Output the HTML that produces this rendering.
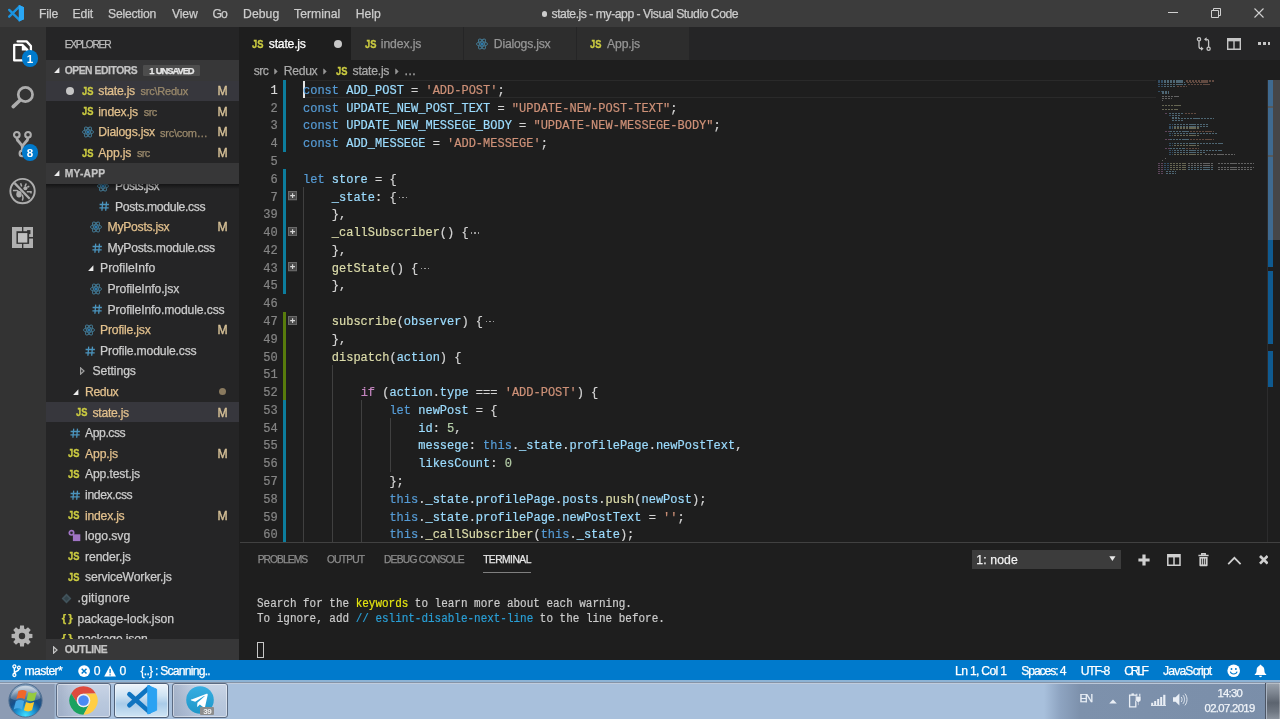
<!DOCTYPE html>
<html><head><meta charset="utf-8"><title>state.js - my-app - Visual Studio Code</title>
<style>
html,body{margin:0;padding:0;background:#1e1e1e;}
body{width:1280px;height:719px;overflow:hidden;position:relative;font-family:"Liberation Sans",sans-serif;}
#r{position:absolute;left:0;top:0;width:1280px;height:719px;overflow:hidden;will-change:transform;filter:blur(0.4px);}
#r div,#r span,#r svg{position:absolute;}
#r span{white-space:pre;}
#r .code span{position:static;}
</style></head><body><div id="r">
<div style="left:0px;top:0px;width:1280px;height:27px;background:#3c3c3c;"></div>
<div style="left:0px;top:27px;width:46.3px;height:632.5px;background:#333333;"></div>
<div style="left:46.3px;top:27px;width:193.2px;height:632.5px;background:#252526;"></div>
<div style="left:239.5px;top:27px;width:1040.5px;height:33px;background:#252526;"></div>
<div style="left:239.5px;top:60px;width:1040.5px;height:599.5px;background:#1e1e1e;"></div>
<div style="left:0px;top:659.5px;width:1280px;height:20.5px;background:#007acc;"></div>
<svg style="left:6px;top:3px;" width="22" height="21" viewBox="0 0 22 21"><path d="M12.8 2.1L18 4.3V16.300L12.800 18.500z" fill="#2aa7f5"/>
<path d="M3.200 6.900L13.600 17.200" stroke="#1b93e0" stroke-width="2.400" stroke-linecap="round"/>
<path d="M3.200 13.700L13.600 3.400" stroke="#1b93e0" stroke-width="2.400" stroke-linecap="round"/>
<path d="M12.900 6.600L8.600 10.300L12.900 14z" fill="#3c3c3c"/>
<path d="M12.800 2.100L18 4.300V16.300L12.800 18.500z" fill="#2aa7f5"/></svg>
<span style="left:39.07px;top:5.56px;font-size:12.2px;line-height:17.08px;color:#cccccc;letter-spacing:-0.162px;-webkit-text-stroke:0.25px #cccccc;">File</span>
<span style="left:72.57px;top:5.56px;font-size:12.2px;line-height:17.08px;color:#cccccc;letter-spacing:-0.121px;-webkit-text-stroke:0.25px #cccccc;">Edit</span>
<span style="left:108.07px;top:5.56px;font-size:12.2px;line-height:17.08px;color:#cccccc;letter-spacing:-0.248px;-webkit-text-stroke:0.25px #cccccc;">Selection</span>
<span style="left:172.07px;top:5.56px;font-size:12.2px;line-height:17.08px;color:#cccccc;letter-spacing:-0.183px;-webkit-text-stroke:0.25px #cccccc;">View</span>
<span style="left:212.57px;top:5.56px;font-size:12.2px;line-height:17.08px;color:#cccccc;letter-spacing:-1.112px;-webkit-text-stroke:0.25px #cccccc;">Go</span>
<span style="left:243.07px;top:5.56px;font-size:12.2px;line-height:17.08px;color:#cccccc;letter-spacing:0.058px;-webkit-text-stroke:0.25px #cccccc;">Debug</span>
<span style="left:294.07px;top:5.56px;font-size:12.2px;line-height:17.08px;color:#cccccc;letter-spacing:0.013px;-webkit-text-stroke:0.25px #cccccc;">Terminal</span>
<span style="left:355.67px;top:5.56px;font-size:12.2px;line-height:17.08px;color:#cccccc;letter-spacing:0.025px;-webkit-text-stroke:0.25px #cccccc;">Help</span>
<div style="left:541.5px;top:11.2px;width:5.8px;height:5.8px;background:#cccccc;border-radius:50%"></div>
<span style="left:551.57px;top:5.76px;font-size:12.2px;line-height:17.08px;color:#cccccc;letter-spacing:-0.468px;-webkit-text-stroke:0.25px #cccccc;">state.js - my-app - Visual Studio Code</span>
<div style="left:1168px;top:12.2px;width:10px;height:1px;background:#d0d0d0;"></div>
<svg style="left:1210px;top:7px;" width="12" height="12" viewBox="0 0 12 12"><path d="M1.5 3.5h7v7h-7z M3.5 3.5v-2h7v7h-2" fill="none" stroke="#d0d0d0" stroke-width="1"/></svg>
<svg style="left:1254px;top:8px;" width="10" height="10" viewBox="0 0 10 10"><path d="M0.5 0.5L9.5 9.5M9.5 0.5L0.5 9.5" stroke="#d0d0d0" stroke-width="1.1"/></svg>
<svg style="left:10px;top:37px;" width="26" height="28" viewBox="0 0 26 28"><g fill="none" stroke="#ffffff" stroke-width="2.3" stroke-linejoin="round" stroke-linecap="round">
<path d="M7.600 4.400H16.600L20.900 9V16"/>
<path d="M4.200 7.800H12.300L17.300 12.900V23.400H4.200z"/>
</g><path d="M11.800 8V13.400H17.300z" fill="#ffffff"/></svg>
<div style="left:21.8px;top:50.3px;width:16.5px;height:16.5px;background:#007acc;border-radius:50%"></div>
<span style="left:30.00px;top:50.58px;font-size:11.6px;line-height:16.24px;color:#ffffff;letter-spacing:0.000px;font-weight:700;transform:translateX(-50%);">1</span>
<svg style="left:8px;top:84px;" width="30" height="28" viewBox="0 0 30 28"><circle cx="17.4" cy="10.5" r="7.15" fill="none" stroke="#adadad" stroke-width="2.7"/>
<path d="M12 16.200L5.200 22.600" stroke="#adadad" stroke-width="3.6" stroke-linecap="round"/></svg>
<svg style="left:10px;top:128px;" width="30" height="32" viewBox="0 0 30 32"><g fill="none" stroke="#adadad" stroke-width="2.1">
<circle cx="6.800" cy="6.800" r="2.800"/><circle cx="18" cy="6.800" r="2.800"/><circle cx="12.400" cy="25.400" r="2.800"/></g>
<path d="M6.800 9.800C6.800 14 12.400 15 12.400 19.500V22.600M18 9.800C18 14 12.400 15 12.400 19.500" fill="none" stroke="#adadad" stroke-width="2.900"/></svg>
<div style="left:21.8px;top:144.4px;width:16.5px;height:16.5px;background:#007acc;border-radius:50%"></div>
<span style="left:30.00px;top:144.68px;font-size:11.6px;line-height:16.24px;color:#ffffff;letter-spacing:0.000px;font-weight:700;transform:translateX(-50%);">8</span>
<svg style="left:8px;top:177px;" width="29" height="29" viewBox="0 0 29 29"><circle cx="14.55" cy="14.1" r="12.2" fill="none" stroke="#adadad" stroke-width="1.9"/>
<path d="M6.600 6.100L21.700 21.700" stroke="#adadad" stroke-width="2.3"/>
<ellipse cx="11" cy="17.300" rx="2.700" ry="3.200" fill="#adadad"/>
<circle cx="17.400" cy="11.300" r="2" fill="#adadad"/>
<path d="M4.900 13.600H8.800Q10 13.700 10.400 15M14.300 17.600Q15.700 21 14.300 23.600M12.600 6.200L13.700 9.600M18.300 6.500L17 9.400M18.800 14.800H23V16.500M19.300 10.200L21.300 9.300" stroke="#adadad" stroke-width="1.5" fill="none"/></svg>
<svg style="left:11.8px;top:226.9px;" width="21.4" height="21.2" viewBox="0 0 21.4 21.2"><rect x="0" y="0" width="21.35" height="21.1" fill="#b0b0b0"/>
<rect x="4.45" y="4.2" width="12.7" height="12.7" fill="#333"/>
<rect x="10" y="0" width="1.35" height="21.2" fill="#333"/>
<rect x="17" y="10" width="4.5" height="1.55" fill="#333"/>
<rect x="15.1" y="3.1" width="3.35" height="4" fill="#333"/>
<rect x="5.95" y="6.1" width="9.4" height="9.5" fill="#c0c0c0"/></svg>
<svg style="left:11.3px;top:625.25px;" width="22" height="22" viewBox="0 0 22 22"><path d="M18.26 8.75L21.42 9.05L21.42 12.95L18.26 13.25L17.72 14.55L19.75 16.99L16.99 19.75L14.55 17.72L13.25 18.26L12.95 21.42L9.05 21.42L8.75 18.26L7.45 17.72L5.01 19.75L2.25 16.99L4.28 14.55L3.74 13.25L0.58 12.95L0.58 9.05L3.74 8.75L4.28 7.45L2.25 5.01L5.01 2.25L7.45 4.28L8.75 3.74L9.05 0.58L12.95 0.58L13.25 3.74L14.55 4.28L16.99 2.25L19.75 5.01L17.72 7.45Z M14.2 11 A3.2 3.2 0 1 0 7.8 11 A3.2 3.2 0 1 0 14.2 11Z" fill="#b4b4b4" fill-rule="evenodd"/></svg>
<div style="left:46.3px;top:401.9px;width:193.2px;height:20.5px;background:#37373d;"></div>
<svg style="left:97.3px;top:180.0px;" width="12" height="12" viewBox="0 0 12 12"><g fill="none" stroke="#4a8fb0" stroke-width="0.95" opacity="0.78">
<ellipse cx="6" cy="6" rx="5.600" ry="2.200"/><ellipse cx="6" cy="6" rx="5.600" ry="2.200" transform="rotate(60 6 6)"/><ellipse cx="6" cy="6" rx="5.600" ry="2.200" transform="rotate(120 6 6)"/></g><circle cx="6" cy="6" r="1.500" fill="#2a78ad"/></svg>
<span style="left:115.07px;top:177.96px;font-size:12.2px;line-height:17.08px;color:#cccccc;letter-spacing:-0.514px;-webkit-text-stroke:0.25px #cccccc;">Posts.jsx</span>
<svg style="left:99.1px;top:201.4px;" width="10.4" height="10.4" viewBox="0 0 10.4 10.4"><path d="M3.700 0.600L2.900 9.800M7.500 0.600L6.700 9.800M0.600 3.500H9.900M0.400 6.900H9.700" stroke="#4b94bd" stroke-width="1.3" fill="none"/></svg>
<span style="left:115.07px;top:198.56px;font-size:12.2px;line-height:17.08px;color:#cccccc;letter-spacing:-0.324px;-webkit-text-stroke:0.25px #cccccc;">Posts.module.css</span>
<svg style="left:90.3px;top:221.2px;" width="12" height="12" viewBox="0 0 12 12"><g fill="none" stroke="#4a8fb0" stroke-width="0.95" opacity="0.78">
<ellipse cx="6" cy="6" rx="5.600" ry="2.200"/><ellipse cx="6" cy="6" rx="5.600" ry="2.200" transform="rotate(60 6 6)"/><ellipse cx="6" cy="6" rx="5.600" ry="2.200" transform="rotate(120 6 6)"/></g><circle cx="6" cy="6" r="1.500" fill="#2a78ad"/></svg>
<span style="left:107.57px;top:219.16px;font-size:12.2px;line-height:17.08px;color:#e2c08d;letter-spacing:-0.286px;-webkit-text-stroke:0.25px #e2c08d;">MyPosts.jsx</span>
<span style="left:217.47px;top:219.16px;font-size:12.2px;line-height:17.08px;color:#d6c097;letter-spacing:0.000px;-webkit-text-stroke:0.35px #d6c097;">M</span>
<svg style="left:92.1px;top:242.60000000000002px;" width="10.4" height="10.4" viewBox="0 0 10.4 10.4"><path d="M3.700 0.600L2.900 9.800M7.500 0.600L6.700 9.800M0.600 3.500H9.900M0.400 6.900H9.700" stroke="#4b94bd" stroke-width="1.3" fill="none"/></svg>
<span style="left:107.57px;top:239.76px;font-size:12.2px;line-height:17.08px;color:#cccccc;letter-spacing:-0.242px;-webkit-text-stroke:0.25px #cccccc;">MyPosts.module.css</span>
<svg style="left:87.6px;top:265.2px;" width="6" height="6.4" viewBox="0 0 6 6.4"><path d="M5.4 0.3V5.9H0.1z" fill="#ececec"/></svg>
<span style="left:100.07px;top:260.36px;font-size:12.2px;line-height:17.08px;color:#cccccc;letter-spacing:0.028px;-webkit-text-stroke:0.25px #cccccc;">ProfileInfo</span>
<svg style="left:90.3px;top:283.0px;" width="12" height="12" viewBox="0 0 12 12"><g fill="none" stroke="#4a8fb0" stroke-width="0.95" opacity="0.78">
<ellipse cx="6" cy="6" rx="5.600" ry="2.200"/><ellipse cx="6" cy="6" rx="5.600" ry="2.200" transform="rotate(60 6 6)"/><ellipse cx="6" cy="6" rx="5.600" ry="2.200" transform="rotate(120 6 6)"/></g><circle cx="6" cy="6" r="1.500" fill="#2a78ad"/></svg>
<span style="left:107.57px;top:280.96px;font-size:12.2px;line-height:17.08px;color:#cccccc;letter-spacing:-0.107px;-webkit-text-stroke:0.25px #cccccc;">ProfileInfo.jsx</span>
<svg style="left:92.1px;top:304.40000000000003px;" width="10.4" height="10.4" viewBox="0 0 10.4 10.4"><path d="M3.700 0.600L2.900 9.800M7.500 0.600L6.700 9.800M0.600 3.500H9.900M0.400 6.900H9.700" stroke="#4b94bd" stroke-width="1.3" fill="none"/></svg>
<span style="left:107.57px;top:301.56px;font-size:12.2px;line-height:17.08px;color:#cccccc;letter-spacing:-0.131px;-webkit-text-stroke:0.25px #cccccc;">ProfileInfo.module.css</span>
<svg style="left:82.8px;top:324.20000000000005px;" width="12" height="12" viewBox="0 0 12 12"><g fill="none" stroke="#4a8fb0" stroke-width="0.95" opacity="0.78">
<ellipse cx="6" cy="6" rx="5.600" ry="2.200"/><ellipse cx="6" cy="6" rx="5.600" ry="2.200" transform="rotate(60 6 6)"/><ellipse cx="6" cy="6" rx="5.600" ry="2.200" transform="rotate(120 6 6)"/></g><circle cx="6" cy="6" r="1.500" fill="#2a78ad"/></svg>
<span style="left:100.07px;top:322.16px;font-size:12.2px;line-height:17.08px;color:#e2c08d;letter-spacing:-0.217px;-webkit-text-stroke:0.25px #e2c08d;">Profile.jsx</span>
<span style="left:217.47px;top:322.16px;font-size:12.2px;line-height:17.08px;color:#d6c097;letter-spacing:0.000px;-webkit-text-stroke:0.35px #d6c097;">M</span>
<svg style="left:84.6px;top:345.6px;" width="10.4" height="10.4" viewBox="0 0 10.4 10.4"><path d="M3.700 0.600L2.900 9.800M7.500 0.600L6.700 9.800M0.600 3.500H9.900M0.400 6.900H9.700" stroke="#4b94bd" stroke-width="1.3" fill="none"/></svg>
<span style="left:100.07px;top:342.76px;font-size:12.2px;line-height:17.08px;color:#cccccc;letter-spacing:-0.172px;-webkit-text-stroke:0.25px #cccccc;">Profile.module.css</span>
<svg style="left:80px;top:367.4px;" width="5" height="8" viewBox="0 0 5 8"><path d="M0.6 0.9L4 4L0.6 7.1z" fill="none" stroke="#a0a0a0" stroke-width="1.25"/></svg>
<span style="left:92.57px;top:363.36px;font-size:12.2px;line-height:17.08px;color:#cccccc;letter-spacing:-0.092px;-webkit-text-stroke:0.25px #cccccc;">Settings</span>
<svg style="left:72.6px;top:388.8px;" width="6" height="6.4" viewBox="0 0 6 6.4"><path d="M5.4 0.3V5.9H0.1z" fill="#ececec"/></svg>
<span style="left:85.07px;top:383.96px;font-size:12.2px;line-height:17.08px;color:#e2c08d;letter-spacing:-0.395px;-webkit-text-stroke:0.25px #e2c08d;">Redux</span>
<div style="left:218.8px;top:388.4px;width:7px;height:7px;background:#8a7a5f;border-radius:50%"></div>
<span style="left:75.53px;top:404.28px;font-size:11.6px;line-height:16.24px;color:#cbcb41;letter-spacing:0.000px;transform:scaleX(0.806);transform-origin:0 50%;-webkit-text-stroke:0.3px #cbcb41;font-weight:700;">JS</span>
<span style="left:92.57px;top:404.56px;font-size:12.2px;line-height:17.08px;color:#e2c08d;letter-spacing:-0.282px;-webkit-text-stroke:0.25px #e2c08d;">state.js</span>
<span style="left:217.47px;top:404.56px;font-size:12.2px;line-height:17.08px;color:#d6c097;letter-spacing:0.000px;-webkit-text-stroke:0.35px #d6c097;">M</span>
<svg style="left:69.6px;top:428.00000000000006px;" width="10.4" height="10.4" viewBox="0 0 10.4 10.4"><path d="M3.700 0.600L2.900 9.800M7.500 0.600L6.700 9.800M0.600 3.500H9.900M0.400 6.900H9.700" stroke="#4b94bd" stroke-width="1.3" fill="none"/></svg>
<span style="left:85.07px;top:425.16px;font-size:12.2px;line-height:17.08px;color:#cccccc;letter-spacing:-0.451px;-webkit-text-stroke:0.25px #cccccc;">App.css</span>
<span style="left:68.13px;top:445.48px;font-size:11.6px;line-height:16.24px;color:#cbcb41;letter-spacing:0.000px;transform:scaleX(0.806);transform-origin:0 50%;-webkit-text-stroke:0.3px #cbcb41;font-weight:700;">JS</span>
<span style="left:85.07px;top:445.76px;font-size:12.2px;line-height:17.08px;color:#e2c08d;letter-spacing:-0.144px;-webkit-text-stroke:0.25px #e2c08d;">App.js</span>
<span style="left:217.47px;top:445.76px;font-size:12.2px;line-height:17.08px;color:#d6c097;letter-spacing:0.000px;-webkit-text-stroke:0.35px #d6c097;">M</span>
<span style="left:68.13px;top:466.08px;font-size:11.6px;line-height:16.24px;color:#cbcb41;letter-spacing:0.000px;transform:scaleX(0.806);transform-origin:0 50%;-webkit-text-stroke:0.3px #cbcb41;font-weight:700;">JS</span>
<span style="left:85.07px;top:466.36px;font-size:12.2px;line-height:17.08px;color:#cccccc;letter-spacing:-0.175px;-webkit-text-stroke:0.25px #cccccc;">App.test.js</span>
<svg style="left:69.6px;top:489.8px;" width="10.4" height="10.4" viewBox="0 0 10.4 10.4"><path d="M3.700 0.600L2.900 9.800M7.500 0.600L6.700 9.800M0.600 3.500H9.900M0.400 6.900H9.700" stroke="#4b94bd" stroke-width="1.3" fill="none"/></svg>
<span style="left:85.07px;top:486.96px;font-size:12.2px;line-height:17.08px;color:#cccccc;letter-spacing:-0.395px;-webkit-text-stroke:0.25px #cccccc;">index.css</span>
<span style="left:68.13px;top:507.28px;font-size:11.6px;line-height:16.24px;color:#cbcb41;letter-spacing:0.000px;transform:scaleX(0.806);transform-origin:0 50%;-webkit-text-stroke:0.3px #cbcb41;font-weight:700;">JS</span>
<span style="left:85.07px;top:507.56px;font-size:12.2px;line-height:17.08px;color:#e2c08d;letter-spacing:-0.239px;-webkit-text-stroke:0.25px #e2c08d;">index.js</span>
<span style="left:217.47px;top:507.56px;font-size:12.2px;line-height:17.08px;color:#d6c097;letter-spacing:0.000px;-webkit-text-stroke:0.35px #d6c097;">M</span>
<svg style="left:67.5px;top:529.2px;" width="13" height="13" viewBox="0 0 13 13"><circle cx="3.5" cy="3.8" r="2.2" fill="none" stroke="#a074c4" stroke-width="1.7"/><rect x="4.9" y="5.3" width="7.4" height="6.8" fill="#a074c4"/></svg>
<span style="left:85.07px;top:528.16px;font-size:12.2px;line-height:17.08px;color:#cccccc;letter-spacing:-0.036px;-webkit-text-stroke:0.25px #cccccc;">logo.svg</span>
<span style="left:68.13px;top:548.48px;font-size:11.6px;line-height:16.24px;color:#cbcb41;letter-spacing:0.000px;transform:scaleX(0.806);transform-origin:0 50%;-webkit-text-stroke:0.3px #cbcb41;font-weight:700;">JS</span>
<span style="left:85.07px;top:548.76px;font-size:12.2px;line-height:17.08px;color:#cccccc;letter-spacing:-0.106px;-webkit-text-stroke:0.25px #cccccc;">render.js</span>
<span style="left:68.13px;top:569.08px;font-size:11.6px;line-height:16.24px;color:#cbcb41;letter-spacing:0.000px;transform:scaleX(0.806);transform-origin:0 50%;-webkit-text-stroke:0.3px #cbcb41;font-weight:700;">JS</span>
<span style="left:85.07px;top:569.36px;font-size:12.2px;line-height:17.08px;color:#cccccc;letter-spacing:-0.151px;-webkit-text-stroke:0.25px #cccccc;">serviceWorker.js</span>
<svg style="left:61px;top:592.5px;" width="11" height="11" viewBox="0 0 11 11"><path d="M5.5 0.6L10.4 5.5L5.5 10.4L0.6 5.5z" fill="#41535b"/><path d="M5.5 3L8 5.5L5.5 8L3 5.5z" fill="#34444b"/></svg>
<span style="left:77.57px;top:589.96px;font-size:12.2px;line-height:17.08px;color:#cccccc;letter-spacing:0.224px;-webkit-text-stroke:0.25px #cccccc;">.gitignore</span>
<span style="left:61.70px;top:610.52px;font-size:11.4px;line-height:15.96px;color:#cbcb41;letter-spacing:2.023px;-webkit-text-stroke:0.25px #cbcb41;font-weight:700;">{}</span>
<span style="left:77.57px;top:610.56px;font-size:12.2px;line-height:17.08px;color:#cccccc;letter-spacing:-0.072px;-webkit-text-stroke:0.25px #cccccc;">package-lock.json</span>
<span style="left:61.70px;top:631.12px;font-size:11.4px;line-height:15.96px;color:#cbcb41;letter-spacing:2.023px;-webkit-text-stroke:0.25px #cbcb41;font-weight:700;">{}</span>
<span style="left:77.57px;top:631.16px;font-size:12.2px;line-height:17.08px;color:#cccccc;letter-spacing:-0.152px;-webkit-text-stroke:0.25px #cccccc;">package.json</span>
<div style="left:46.3px;top:27px;width:193.2px;height:156.6px;background:#252526;"></div>
<span style="left:64.64px;top:37.69px;font-size:10.3px;line-height:14.42px;color:#bbbbbb;letter-spacing:-1.296px;-webkit-text-stroke:0.25px #bbbbbb;">EXPLORER</span>
<div style="left:46.3px;top:60px;width:193.2px;height:20.5px;background:#373738;"></div>
<svg style="left:53.6px;top:67.1px;" width="6" height="6.4" viewBox="0 0 6 6.4"><path d="M5.4 0.3V5.9H0.1z" fill="#ececec"/></svg>
<span style="left:64.64px;top:63.69px;font-size:10.3px;line-height:14.42px;color:#c4c4c4;letter-spacing:-0.419px;-webkit-text-stroke:0.25px #c4c4c4;font-weight:700;">OPEN EDITORS</span>
<div style="left:143px;top:64.6px;width:57px;height:11.8px;background:#4d4d4d;border-radius:1px;"></div>
<span style="left:149.17px;top:64.42px;font-size:9.4px;line-height:13.16px;color:#e6e6e6;letter-spacing:0.000px;-webkit-text-stroke:0.25px #e6e6e6;font-weight:700;">1</span>
<span style="left:155.77px;top:64.42px;font-size:9.4px;line-height:13.16px;color:#e6e6e6;letter-spacing:-1.050px;-webkit-text-stroke:0.25px #e6e6e6;font-weight:700;">UNSAVED</span>
<div style="left:46.3px;top:80.5px;width:193.2px;height:20.4px;background:#37373d;"></div>
<div style="left:66.3px;top:87.2px;width:8px;height:8px;background:#c5c5c5;border-radius:50%"></div>
<span style="left:81.53px;top:82.88px;font-size:11.6px;line-height:16.24px;color:#cbcb41;letter-spacing:0.000px;transform:scaleX(0.806);transform-origin:0 50%;-webkit-text-stroke:0.3px #cbcb41;font-weight:700;">JS</span>
<span style="left:98.32px;top:83.16px;font-size:12.2px;line-height:17.08px;color:#e2c08d;letter-spacing:-0.246px;-webkit-text-stroke:0.25px #e2c08d;">state.js</span>
<span style="left:140.62px;top:84.30px;font-size:11.0px;line-height:15.4px;color:#9b8a6c;letter-spacing:-0.245px;-webkit-text-stroke:0.25px #9b8a6c;">src\Redux</span>
<span style="left:217.47px;top:83.16px;font-size:12.2px;line-height:17.08px;color:#d6c097;letter-spacing:0.000px;-webkit-text-stroke:0.35px #d6c097;">M</span>
<span style="left:81.53px;top:103.48px;font-size:11.6px;line-height:16.24px;color:#cbcb41;letter-spacing:0.000px;transform:scaleX(0.806);transform-origin:0 50%;-webkit-text-stroke:0.3px #cbcb41;font-weight:700;">JS</span>
<span style="left:98.32px;top:103.76px;font-size:12.2px;line-height:17.08px;color:#e2c08d;letter-spacing:-0.203px;-webkit-text-stroke:0.25px #e2c08d;">index.js</span>
<span style="left:143.87px;top:104.90px;font-size:11.0px;line-height:15.4px;color:#9b8a6c;letter-spacing:-0.676px;-webkit-text-stroke:0.25px #9b8a6c;">src</span>
<span style="left:217.47px;top:103.76px;font-size:12.2px;line-height:17.08px;color:#d6c097;letter-spacing:0.000px;-webkit-text-stroke:0.35px #d6c097;">M</span>
<svg style="left:81.5px;top:126.4px;" width="12" height="12" viewBox="0 0 12 12"><g fill="none" stroke="#4a8fb0" stroke-width="0.95" opacity="0.78">
<ellipse cx="6" cy="6" rx="5.600" ry="2.200"/><ellipse cx="6" cy="6" rx="5.600" ry="2.200" transform="rotate(60 6 6)"/><ellipse cx="6" cy="6" rx="5.600" ry="2.200" transform="rotate(120 6 6)"/></g><circle cx="6" cy="6" r="1.500" fill="#2a78ad"/></svg>
<span style="left:98.32px;top:124.36px;font-size:12.2px;line-height:17.08px;color:#e2c08d;letter-spacing:-0.203px;-webkit-text-stroke:0.25px #e2c08d;">Dialogs.jsx</span>
<span style="left:160.12px;top:125.50px;font-size:11.0px;line-height:15.4px;color:#9b8a6c;letter-spacing:-0.276px;-webkit-text-stroke:0.25px #9b8a6c;">src\com…</span>
<span style="left:217.47px;top:124.36px;font-size:12.2px;line-height:17.08px;color:#d6c097;letter-spacing:0.000px;-webkit-text-stroke:0.35px #d6c097;">M</span>
<span style="left:81.53px;top:144.68px;font-size:11.6px;line-height:16.24px;color:#cbcb41;letter-spacing:0.000px;transform:scaleX(0.806);transform-origin:0 50%;-webkit-text-stroke:0.3px #cbcb41;font-weight:700;">JS</span>
<span style="left:98.32px;top:144.96px;font-size:12.2px;line-height:17.08px;color:#e2c08d;letter-spacing:-0.144px;-webkit-text-stroke:0.25px #e2c08d;">App.js</span>
<span style="left:137.12px;top:146.10px;font-size:11.0px;line-height:15.4px;color:#9b8a6c;letter-spacing:-0.801px;-webkit-text-stroke:0.25px #9b8a6c;">src</span>
<span style="left:217.47px;top:144.96px;font-size:12.2px;line-height:17.08px;color:#d6c097;letter-spacing:0.000px;-webkit-text-stroke:0.35px #d6c097;">M</span>
<div style="left:46.3px;top:163px;width:193.2px;height:20.6px;background:#373738;"></div>
<div style="left:46.3px;top:183.6px;width:193.2px;height:5px;background:linear-gradient(rgba(0,0,0,.45),rgba(0,0,0,0));"></div>
<svg style="left:53.6px;top:169.8px;" width="6" height="6.4" viewBox="0 0 6 6.4"><path d="M5.4 0.3V5.9H0.1z" fill="#ececec"/></svg>
<span style="left:64.64px;top:166.59px;font-size:10.3px;line-height:14.42px;color:#c4c4c4;letter-spacing:0.207px;-webkit-text-stroke:0.25px #c4c4c4;font-weight:700;">MY-APP</span>
<div style="left:46.3px;top:639.25px;width:193.2px;height:20.3px;background:#373738;"></div>
<svg style="left:52.5px;top:645.5px;" width="5" height="8" viewBox="0 0 5 8"><path d="M0.6 0.9L4 4L0.6 7.1z" fill="none" stroke="#c5c5c5" stroke-width="1.25"/></svg>
<span style="left:64.64px;top:642.79px;font-size:10.3px;line-height:14.42px;color:#c4c4c4;letter-spacing:-0.364px;-webkit-text-stroke:0.25px #c4c4c4;font-weight:700;">OUTLINE</span>
<div style="left:239.5px;top:27px;width:111px;height:33px;background:#1e1e1e;"></div>
<div style="left:351.3px;top:27px;width:111.7px;height:33px;background:#2d2d2d;"></div>
<div style="left:463.8px;top:27px;width:112.45px;height:33px;background:#2d2d2d;"></div>
<div style="left:577.05px;top:27px;width:111.7px;height:33px;background:#2d2d2d;"></div>
<span style="left:252.03px;top:35.88px;font-size:11.6px;line-height:16.24px;color:#cbcb41;letter-spacing:0.000px;transform:scaleX(0.806);transform-origin:0 50%;-webkit-text-stroke:0.3px #cbcb41;font-weight:700;">JS</span>
<span style="left:268.82px;top:36.16px;font-size:12.2px;line-height:17.08px;color:#ffffff;letter-spacing:-0.210px;-webkit-text-stroke:0.25px #ffffff;">state.js</span>
<div style="left:333.9px;top:40.1px;width:8.2px;height:8.2px;background:#c8c8c8;border-radius:50%"></div>
<span style="left:364.53px;top:35.88px;font-size:11.6px;line-height:16.24px;color:#cbcb41;letter-spacing:0.000px;transform:scaleX(0.806);transform-origin:0 50%;-webkit-text-stroke:0.3px #cbcb41;font-weight:700;">JS</span>
<span style="left:380.82px;top:36.16px;font-size:12.2px;line-height:17.08px;color:#969696;letter-spacing:-0.096px;-webkit-text-stroke:0.25px #969696;">index.js</span>
<svg style="left:476.3px;top:38.2px;" width="12" height="12" viewBox="0 0 12 12"><g fill="none" stroke="#4a8fb0" stroke-width="0.95" opacity="0.78">
<ellipse cx="6" cy="6" rx="5.600" ry="2.200"/><ellipse cx="6" cy="6" rx="5.600" ry="2.200" transform="rotate(60 6 6)"/><ellipse cx="6" cy="6" rx="5.600" ry="2.200" transform="rotate(120 6 6)"/></g><circle cx="6" cy="6" r="1.500" fill="#2a78ad"/></svg>
<span style="left:493.82px;top:36.16px;font-size:12.2px;line-height:17.08px;color:#969696;letter-spacing:-0.203px;-webkit-text-stroke:0.25px #969696;">Dialogs.jsx</span>
<span style="left:590.13px;top:35.88px;font-size:11.6px;line-height:16.24px;color:#cbcb41;letter-spacing:0.000px;transform:scaleX(0.806);transform-origin:0 50%;-webkit-text-stroke:0.3px #cbcb41;font-weight:700;">JS</span>
<span style="left:607.07px;top:36.16px;font-size:12.2px;line-height:17.08px;color:#969696;letter-spacing:-0.144px;-webkit-text-stroke:0.25px #969696;">App.js</span>
<svg style="left:1196px;top:36px;" width="16" height="16" viewBox="0 0 16 16"><g fill="none" stroke="#c5c5c5" stroke-width="1.3"><circle cx="3" cy="3.2" r="1.6"/><circle cx="12.6" cy="12.8" r="1.6"/>
<path d="M3 5v5.5c0 1.6 1 2.2 2.4 2.2M12.6 11V5.5c0-1.6-1-2.2-2.4-2.2"/></g><path d="M5 10.6l2.6 2.1L5 14.8zM10.6 1.2L8 3.3l2.6 2.1z" fill="#c5c5c5"/></svg>
<svg style="left:1227px;top:38px;" width="14" height="12" viewBox="0 0 14 12"><path d="M0.7 0.7h12.6v10.6H0.7z M0.7 2.6h12.6 M7 2.6v8.7" fill="none" stroke="#c5c5c5" stroke-width="1.4"/><rect x="0.7" y="0.7" width="12.6" height="2.4" fill="#c5c5c5"/></svg>
<div style="left:1258px;top:42.2px;width:2.8px;height:2.8px;background:#c5c5c5;"></div>
<div style="left:1262.8px;top:42.2px;width:2.8px;height:2.8px;background:#c5c5c5;"></div>
<div style="left:1267.6px;top:42.2px;width:2.8px;height:2.8px;background:#c5c5c5;"></div>
<span style="left:253.82px;top:63.16px;font-size:12.2px;line-height:17.08px;color:#a9a9a9;letter-spacing:-0.548px;-webkit-text-stroke:0.25px #a9a9a9;">src</span>
<svg style="left:274px;top:68.2px;" width="4" height="7" viewBox="0 0 4 7"><path d="M0.6 0.8L3.2 3.5L0.6 6.2z" fill="#9a9a9a" stroke="#9a9a9a" stroke-width="0.6"/></svg>
<span style="left:283.82px;top:63.16px;font-size:12.2px;line-height:17.08px;color:#a9a9a9;letter-spacing:-0.333px;-webkit-text-stroke:0.25px #a9a9a9;">Redux</span>
<svg style="left:323px;top:68.2px;" width="4" height="7" viewBox="0 0 4 7"><path d="M0.6 0.8L3.2 3.5L0.6 6.2z" fill="#9a9a9a" stroke="#9a9a9a" stroke-width="0.6"/></svg>
<span style="left:335.53px;top:62.88px;font-size:11.6px;line-height:16.24px;color:#cbcb41;letter-spacing:0.000px;transform:scaleX(0.806);transform-origin:0 50%;-webkit-text-stroke:0.3px #cbcb41;font-weight:700;">JS</span>
<span style="left:352.57px;top:63.16px;font-size:12.2px;line-height:17.08px;color:#a9a9a9;letter-spacing:-0.246px;-webkit-text-stroke:0.25px #a9a9a9;">state.js</span>
<svg style="left:395px;top:68.2px;" width="4" height="7" viewBox="0 0 4 7"><path d="M0.6 0.8L3.2 3.5L0.6 6.2z" fill="#9a9a9a" stroke="#9a9a9a" stroke-width="0.6"/></svg>
<span style="left:404.07px;top:63.36px;font-size:12.2px;line-height:17.08px;color:#a9a9a9;letter-spacing:0.000px;-webkit-text-stroke:0.25px #a9a9a9;">…</span>
<div style="left:302.5px;top:80.4px;width:853.5px;height:17.78px;background:transparent;box-sizing:border-box;border-top:1px solid #2a2a2a;border-bottom:1px solid #2a2a2a;"></div>
<div style="left:282.6px;top:80.4px;width:3.1px;height:71.12px;background:#0c7d9d;"></div>
<div style="left:282.6px;top:169.3px;width:3.1px;height:124.46000000000001px;background:#0c7d9d;"></div>
<div style="left:282.6px;top:311.54px;width:3.1px;height:88.9px;background:#587c0c;"></div>
<div style="left:282.6px;top:400.44000000000005px;width:3.1px;height:142.05999999999995px;background:#0c7d9d;"></div>
<div style="left:303.2px;top:187.08px;width:1px;height:355.41999999999996px;background:#404040;"></div>
<div style="left:332.2px;top:364.88px;width:1px;height:177.62px;background:#404040;"></div>
<div style="left:361px;top:400.44000000000005px;width:1px;height:142.05999999999995px;background:#404040;"></div>
<div style="left:389.8px;top:418.22px;width:1px;height:53.34px;background:#404040;"></div>
<div style="left:302.6px;top:80.7px;width:2.2px;height:17.18px;background:#e4e4e4;"></div>
<div style="left:239.5px;top:80.4px;width:1028.5px;height:462.1px;overflow:hidden;">
<div class="code" style="left:0;top:2.450px;height:17.78px;line-height:17.78px;width:38.10px;text-align:right;font-family:'Liberation Mono',monospace;font-size:12.018px;letter-spacing:0.0001px;color:#d8d8d8;white-space:pre;-webkit-text-stroke:0.2px;">1</div>
<div class="code" style="left:63.5px;top:2.450px;height:17.78px;line-height:17.78px;font-family:'Liberation Mono',monospace;font-size:12.018px;letter-spacing:0.0001px;color:#d4d4d4;white-space:pre;-webkit-text-stroke:0.2px;"><span style="color:#569cd6">const</span> <span style="color:#9cdcfe">ADD_POST</span> = <span style="color:#ce9178">&#x27;ADD-POST&#x27;</span>;</div>
<div class="code" style="left:0;top:20.230px;height:17.78px;line-height:17.78px;width:38.10px;text-align:right;font-family:'Liberation Mono',monospace;font-size:12.018px;letter-spacing:0.0001px;color:#858585;white-space:pre;-webkit-text-stroke:0.2px;">2</div>
<div class="code" style="left:63.5px;top:20.230px;height:17.78px;line-height:17.78px;font-family:'Liberation Mono',monospace;font-size:12.018px;letter-spacing:0.0001px;color:#d4d4d4;white-space:pre;-webkit-text-stroke:0.2px;"><span style="color:#569cd6">const</span> <span style="color:#9cdcfe">UPDATE_NEW_POST_TEXT</span> = <span style="color:#ce9178">&quot;UPDATE-NEW-POST-TEXT&quot;</span>;</div>
<div class="code" style="left:0;top:38.010px;height:17.78px;line-height:17.78px;width:38.10px;text-align:right;font-family:'Liberation Mono',monospace;font-size:12.018px;letter-spacing:0.0001px;color:#858585;white-space:pre;-webkit-text-stroke:0.2px;">3</div>
<div class="code" style="left:63.5px;top:38.010px;height:17.78px;line-height:17.78px;font-family:'Liberation Mono',monospace;font-size:12.018px;letter-spacing:0.0001px;color:#d4d4d4;white-space:pre;-webkit-text-stroke:0.2px;"><span style="color:#569cd6">const</span> <span style="color:#9cdcfe">UPDATE_NEW_MESSEGE_BODY</span> = <span style="color:#ce9178">&quot;UPDATE-NEW-MESSEGE-BODY&quot;</span>;</div>
<div class="code" style="left:0;top:55.790px;height:17.78px;line-height:17.78px;width:38.10px;text-align:right;font-family:'Liberation Mono',monospace;font-size:12.018px;letter-spacing:0.0001px;color:#858585;white-space:pre;-webkit-text-stroke:0.2px;">4</div>
<div class="code" style="left:63.5px;top:55.790px;height:17.78px;line-height:17.78px;font-family:'Liberation Mono',monospace;font-size:12.018px;letter-spacing:0.0001px;color:#d4d4d4;white-space:pre;-webkit-text-stroke:0.2px;"><span style="color:#569cd6">const</span> <span style="color:#9cdcfe">ADD_MESSEGE</span> = <span style="color:#ce9178">&#x27;ADD-MESSEGE&#x27;</span>;</div>
<div class="code" style="left:0;top:73.570px;height:17.78px;line-height:17.78px;width:38.10px;text-align:right;font-family:'Liberation Mono',monospace;font-size:12.018px;letter-spacing:0.0001px;color:#858585;white-space:pre;-webkit-text-stroke:0.2px;">5</div>
<div class="code" style="left:0;top:91.350px;height:17.78px;line-height:17.78px;width:38.10px;text-align:right;font-family:'Liberation Mono',monospace;font-size:12.018px;letter-spacing:0.0001px;color:#858585;white-space:pre;-webkit-text-stroke:0.2px;">6</div>
<div class="code" style="left:63.5px;top:91.350px;height:17.78px;line-height:17.78px;font-family:'Liberation Mono',monospace;font-size:12.018px;letter-spacing:0.0001px;color:#d4d4d4;white-space:pre;-webkit-text-stroke:0.2px;"><span style="color:#569cd6">let</span> <span style="color:#9cdcfe">store</span> = {</div>
<div class="code" style="left:0;top:109.130px;height:17.78px;line-height:17.78px;width:38.10px;text-align:right;font-family:'Liberation Mono',monospace;font-size:12.018px;letter-spacing:0.0001px;color:#858585;white-space:pre;-webkit-text-stroke:0.2px;">7</div>
<div style="left:159.46px;top:116.17px;width:9px;height:1.4px;background:repeating-linear-gradient(90deg,#9c9c9c 0 1.4px,transparent 1.4px 3.3px);"></div>
<div class="code" style="left:63.5px;top:109.130px;height:17.78px;line-height:17.78px;font-family:'Liberation Mono',monospace;font-size:12.018px;letter-spacing:0.0001px;color:#d4d4d4;white-space:pre;-webkit-text-stroke:0.2px;">    <span style="color:#9cdcfe">_state</span>: {</div>
<div class="code" style="left:0;top:126.910px;height:17.78px;line-height:17.78px;width:38.10px;text-align:right;font-family:'Liberation Mono',monospace;font-size:12.018px;letter-spacing:0.0001px;color:#858585;white-space:pre;-webkit-text-stroke:0.2px;">39</div>
<div class="code" style="left:63.5px;top:126.910px;height:17.78px;line-height:17.78px;font-family:'Liberation Mono',monospace;font-size:12.018px;letter-spacing:0.0001px;color:#d4d4d4;white-space:pre;-webkit-text-stroke:0.2px;">    },</div>
<div class="code" style="left:0;top:144.690px;height:17.78px;line-height:17.78px;width:38.10px;text-align:right;font-family:'Liberation Mono',monospace;font-size:12.018px;letter-spacing:0.0001px;color:#858585;white-space:pre;-webkit-text-stroke:0.2px;">40</div>
<div style="left:231.58px;top:151.73px;width:9px;height:1.4px;background:repeating-linear-gradient(90deg,#9c9c9c 0 1.4px,transparent 1.4px 3.3px);"></div>
<div class="code" style="left:63.5px;top:144.690px;height:17.78px;line-height:17.78px;font-family:'Liberation Mono',monospace;font-size:12.018px;letter-spacing:0.0001px;color:#d4d4d4;white-space:pre;-webkit-text-stroke:0.2px;">    <span style="color:#dcdcaa">_callSubscriber</span>() {</div>
<div class="code" style="left:0;top:162.470px;height:17.78px;line-height:17.78px;width:38.10px;text-align:right;font-family:'Liberation Mono',monospace;font-size:12.018px;letter-spacing:0.0001px;color:#858585;white-space:pre;-webkit-text-stroke:0.2px;">42</div>
<div class="code" style="left:63.5px;top:162.470px;height:17.78px;line-height:17.78px;font-family:'Liberation Mono',monospace;font-size:12.018px;letter-spacing:0.0001px;color:#d4d4d4;white-space:pre;-webkit-text-stroke:0.2px;">    },</div>
<div class="code" style="left:0;top:180.250px;height:17.78px;line-height:17.78px;width:38.10px;text-align:right;font-family:'Liberation Mono',monospace;font-size:12.018px;letter-spacing:0.0001px;color:#858585;white-space:pre;-webkit-text-stroke:0.2px;">43</div>
<div style="left:181.09px;top:187.29px;width:9px;height:1.4px;background:repeating-linear-gradient(90deg,#9c9c9c 0 1.4px,transparent 1.4px 3.3px);"></div>
<div class="code" style="left:63.5px;top:180.250px;height:17.78px;line-height:17.78px;font-family:'Liberation Mono',monospace;font-size:12.018px;letter-spacing:0.0001px;color:#d4d4d4;white-space:pre;-webkit-text-stroke:0.2px;">    <span style="color:#dcdcaa">getState</span>() {</div>
<div class="code" style="left:0;top:198.030px;height:17.78px;line-height:17.78px;width:38.10px;text-align:right;font-family:'Liberation Mono',monospace;font-size:12.018px;letter-spacing:0.0001px;color:#858585;white-space:pre;-webkit-text-stroke:0.2px;">45</div>
<div class="code" style="left:63.5px;top:198.030px;height:17.78px;line-height:17.78px;font-family:'Liberation Mono',monospace;font-size:12.018px;letter-spacing:0.0001px;color:#d4d4d4;white-space:pre;-webkit-text-stroke:0.2px;">    },</div>
<div class="code" style="left:0;top:215.810px;height:17.78px;line-height:17.78px;width:38.10px;text-align:right;font-family:'Liberation Mono',monospace;font-size:12.018px;letter-spacing:0.0001px;color:#858585;white-space:pre;-webkit-text-stroke:0.2px;">46</div>
<div class="code" style="left:0;top:233.590px;height:17.78px;line-height:17.78px;width:38.10px;text-align:right;font-family:'Liberation Mono',monospace;font-size:12.018px;letter-spacing:0.0001px;color:#858585;white-space:pre;-webkit-text-stroke:0.2px;">47</div>
<div style="left:246.00px;top:240.63px;width:9px;height:1.4px;background:repeating-linear-gradient(90deg,#9c9c9c 0 1.4px,transparent 1.4px 3.3px);"></div>
<div class="code" style="left:63.5px;top:233.590px;height:17.78px;line-height:17.78px;font-family:'Liberation Mono',monospace;font-size:12.018px;letter-spacing:0.0001px;color:#d4d4d4;white-space:pre;-webkit-text-stroke:0.2px;">    <span style="color:#dcdcaa">subscribe</span>(<span style="color:#9cdcfe">observer</span>) {</div>
<div class="code" style="left:0;top:251.370px;height:17.78px;line-height:17.78px;width:38.10px;text-align:right;font-family:'Liberation Mono',monospace;font-size:12.018px;letter-spacing:0.0001px;color:#858585;white-space:pre;-webkit-text-stroke:0.2px;">49</div>
<div class="code" style="left:63.5px;top:251.370px;height:17.78px;line-height:17.78px;font-family:'Liberation Mono',monospace;font-size:12.018px;letter-spacing:0.0001px;color:#d4d4d4;white-space:pre;-webkit-text-stroke:0.2px;">    },</div>
<div class="code" style="left:0;top:269.150px;height:17.78px;line-height:17.78px;width:38.10px;text-align:right;font-family:'Liberation Mono',monospace;font-size:12.018px;letter-spacing:0.0001px;color:#858585;white-space:pre;-webkit-text-stroke:0.2px;">50</div>
<div class="code" style="left:63.5px;top:269.150px;height:17.78px;line-height:17.78px;font-family:'Liberation Mono',monospace;font-size:12.018px;letter-spacing:0.0001px;color:#d4d4d4;white-space:pre;-webkit-text-stroke:0.2px;">    <span style="color:#dcdcaa">dispatch</span>(<span style="color:#9cdcfe">action</span>) {</div>
<div class="code" style="left:0;top:286.930px;height:17.78px;line-height:17.78px;width:38.10px;text-align:right;font-family:'Liberation Mono',monospace;font-size:12.018px;letter-spacing:0.0001px;color:#858585;white-space:pre;-webkit-text-stroke:0.2px;">51</div>
<div class="code" style="left:0;top:304.710px;height:17.78px;line-height:17.78px;width:38.10px;text-align:right;font-family:'Liberation Mono',monospace;font-size:12.018px;letter-spacing:0.0001px;color:#858585;white-space:pre;-webkit-text-stroke:0.2px;">52</div>
<div class="code" style="left:63.5px;top:304.710px;height:17.78px;line-height:17.78px;font-family:'Liberation Mono',monospace;font-size:12.018px;letter-spacing:0.0001px;color:#d4d4d4;white-space:pre;-webkit-text-stroke:0.2px;">        <span style="color:#c586c0">if</span> (<span style="color:#9cdcfe">action</span>.<span style="color:#9cdcfe">type</span> === <span style="color:#ce9178">&#x27;ADD-POST&#x27;</span>) {</div>
<div class="code" style="left:0;top:322.490px;height:17.78px;line-height:17.78px;width:38.10px;text-align:right;font-family:'Liberation Mono',monospace;font-size:12.018px;letter-spacing:0.0001px;color:#858585;white-space:pre;-webkit-text-stroke:0.2px;">53</div>
<div class="code" style="left:63.5px;top:322.490px;height:17.78px;line-height:17.78px;font-family:'Liberation Mono',monospace;font-size:12.018px;letter-spacing:0.0001px;color:#d4d4d4;white-space:pre;-webkit-text-stroke:0.2px;">            <span style="color:#569cd6">let</span> <span style="color:#9cdcfe">newPost</span> = {</div>
<div class="code" style="left:0;top:340.270px;height:17.78px;line-height:17.78px;width:38.10px;text-align:right;font-family:'Liberation Mono',monospace;font-size:12.018px;letter-spacing:0.0001px;color:#858585;white-space:pre;-webkit-text-stroke:0.2px;">54</div>
<div class="code" style="left:63.5px;top:340.270px;height:17.78px;line-height:17.78px;font-family:'Liberation Mono',monospace;font-size:12.018px;letter-spacing:0.0001px;color:#d4d4d4;white-space:pre;-webkit-text-stroke:0.2px;">                <span style="color:#9cdcfe">id</span>: <span style="color:#b5cea8">5</span>,</div>
<div class="code" style="left:0;top:358.050px;height:17.78px;line-height:17.78px;width:38.10px;text-align:right;font-family:'Liberation Mono',monospace;font-size:12.018px;letter-spacing:0.0001px;color:#858585;white-space:pre;-webkit-text-stroke:0.2px;">55</div>
<div class="code" style="left:63.5px;top:358.050px;height:17.78px;line-height:17.78px;font-family:'Liberation Mono',monospace;font-size:12.018px;letter-spacing:0.0001px;color:#d4d4d4;white-space:pre;-webkit-text-stroke:0.2px;">                <span style="color:#9cdcfe">messege</span>: <span style="color:#569cd6">this</span>.<span style="color:#9cdcfe">_state</span>.<span style="color:#9cdcfe">profilePage</span>.<span style="color:#9cdcfe">newPostText</span>,</div>
<div class="code" style="left:0;top:375.830px;height:17.78px;line-height:17.78px;width:38.10px;text-align:right;font-family:'Liberation Mono',monospace;font-size:12.018px;letter-spacing:0.0001px;color:#858585;white-space:pre;-webkit-text-stroke:0.2px;">56</div>
<div class="code" style="left:63.5px;top:375.830px;height:17.78px;line-height:17.78px;font-family:'Liberation Mono',monospace;font-size:12.018px;letter-spacing:0.0001px;color:#d4d4d4;white-space:pre;-webkit-text-stroke:0.2px;">                <span style="color:#9cdcfe">likesCount</span>: <span style="color:#b5cea8">0</span></div>
<div class="code" style="left:0;top:393.610px;height:17.78px;line-height:17.78px;width:38.10px;text-align:right;font-family:'Liberation Mono',monospace;font-size:12.018px;letter-spacing:0.0001px;color:#858585;white-space:pre;-webkit-text-stroke:0.2px;">57</div>
<div class="code" style="left:63.5px;top:393.610px;height:17.78px;line-height:17.78px;font-family:'Liberation Mono',monospace;font-size:12.018px;letter-spacing:0.0001px;color:#d4d4d4;white-space:pre;-webkit-text-stroke:0.2px;">            };</div>
<div class="code" style="left:0;top:411.390px;height:17.78px;line-height:17.78px;width:38.10px;text-align:right;font-family:'Liberation Mono',monospace;font-size:12.018px;letter-spacing:0.0001px;color:#858585;white-space:pre;-webkit-text-stroke:0.2px;">58</div>
<div class="code" style="left:63.5px;top:411.390px;height:17.78px;line-height:17.78px;font-family:'Liberation Mono',monospace;font-size:12.018px;letter-spacing:0.0001px;color:#d4d4d4;white-space:pre;-webkit-text-stroke:0.2px;">            <span style="color:#569cd6">this</span>.<span style="color:#9cdcfe">_state</span>.<span style="color:#9cdcfe">profilePage</span>.<span style="color:#9cdcfe">posts</span>.<span style="color:#dcdcaa">push</span>(<span style="color:#9cdcfe">newPost</span>);</div>
<div class="code" style="left:0;top:429.170px;height:17.78px;line-height:17.78px;width:38.10px;text-align:right;font-family:'Liberation Mono',monospace;font-size:12.018px;letter-spacing:0.0001px;color:#858585;white-space:pre;-webkit-text-stroke:0.2px;">59</div>
<div class="code" style="left:63.5px;top:429.170px;height:17.78px;line-height:17.78px;font-family:'Liberation Mono',monospace;font-size:12.018px;letter-spacing:0.0001px;color:#d4d4d4;white-space:pre;-webkit-text-stroke:0.2px;">            <span style="color:#569cd6">this</span>.<span style="color:#9cdcfe">_state</span>.<span style="color:#9cdcfe">profilePage</span>.<span style="color:#9cdcfe">newPostText</span> = <span style="color:#ce9178">&#x27;&#x27;</span>;</div>
<div class="code" style="left:0;top:446.950px;height:17.78px;line-height:17.78px;width:38.10px;text-align:right;font-family:'Liberation Mono',monospace;font-size:12.018px;letter-spacing:0.0001px;color:#858585;white-space:pre;-webkit-text-stroke:0.2px;">60</div>
<div class="code" style="left:63.5px;top:446.950px;height:17.78px;line-height:17.78px;font-family:'Liberation Mono',monospace;font-size:12.018px;letter-spacing:0.0001px;color:#d4d4d4;white-space:pre;-webkit-text-stroke:0.2px;">            <span style="color:#569cd6">this</span>.<span style="color:#dcdcaa">_callSubscriber</span>(<span style="color:#569cd6">this</span>.<span style="color:#9cdcfe">_state</span>);</div>
</div>
<svg style="left:288px;top:191.37000000000003px;" width="9.2" height="9.2" viewBox="0 0 9.2 9.2"><rect x="0" y="0" width="9.2" height="9.2" fill="#4a4a4a"/><rect x="0.5" y="0.5" width="8.2" height="8.2" fill="none" stroke="#6a6a6a" stroke-width="1"/><path d="M2.2 4.6h4.8M4.6 2.2v4.8" stroke="#d8d8d8" stroke-width="1.1"/></svg>
<svg style="left:288px;top:226.93000000000004px;" width="9.2" height="9.2" viewBox="0 0 9.2 9.2"><rect x="0" y="0" width="9.2" height="9.2" fill="#4a4a4a"/><rect x="0.5" y="0.5" width="8.2" height="8.2" fill="none" stroke="#6a6a6a" stroke-width="1"/><path d="M2.2 4.6h4.8M4.6 2.2v4.8" stroke="#d8d8d8" stroke-width="1.1"/></svg>
<svg style="left:288px;top:262.49px;" width="9.2" height="9.2" viewBox="0 0 9.2 9.2"><rect x="0" y="0" width="9.2" height="9.2" fill="#4a4a4a"/><rect x="0.5" y="0.5" width="8.2" height="8.2" fill="none" stroke="#6a6a6a" stroke-width="1"/><path d="M2.2 4.6h4.8M4.6 2.2v4.8" stroke="#d8d8d8" stroke-width="1.1"/></svg>
<svg style="left:288px;top:315.83px;" width="9.2" height="9.2" viewBox="0 0 9.2 9.2"><rect x="0" y="0" width="9.2" height="9.2" fill="#4a4a4a"/><rect x="0.5" y="0.5" width="8.2" height="8.2" fill="none" stroke="#6a6a6a" stroke-width="1"/><path d="M2.2 4.6h4.8M4.6 2.2v4.8" stroke="#d8d8d8" stroke-width="1.1"/></svg>
<div style="left:1157.95px;top:80.46px;width:5.78px;height:1.15px;opacity:0.38;background:repeating-linear-gradient(90deg,#569cd6 0 2.1px,transparent 2.1px 2.9px);"></div>
<div style="left:1164.46px;top:80.46px;width:19.52px;height:1.15px;opacity:0.38;background:repeating-linear-gradient(90deg,#9cdcfe 0 2.1px,transparent 2.1px 2.9px);"></div>
<div style="left:1186.14px;top:80.46px;width:27.47px;height:1.15px;opacity:0.38;background:repeating-linear-gradient(90deg,#ce9178 0 2.1px,transparent 2.1px 2.9px);"></div>
<div style="left:1157.95px;top:82.34px;width:5.78px;height:1.15px;opacity:0.38;background:repeating-linear-gradient(90deg,#569cd6 0 2.1px,transparent 2.1px 2.9px);"></div>
<div style="left:1164.46px;top:82.34px;width:20.24px;height:1.15px;opacity:0.38;background:repeating-linear-gradient(90deg,#9cdcfe 0 2.1px,transparent 2.1px 2.9px);"></div>
<div style="left:1186.87px;top:82.34px;width:20.96px;height:1.15px;opacity:0.38;background:repeating-linear-gradient(90deg,#ce9178 0 2.1px,transparent 2.1px 2.9px);"></div>
<div style="left:1157.95px;top:84.07px;width:5.78px;height:1.15px;opacity:0.38;background:repeating-linear-gradient(90deg,#569cd6 0 2.1px,transparent 2.1px 2.9px);"></div>
<div style="left:1164.46px;top:84.07px;width:21.69px;height:1.15px;opacity:0.38;background:repeating-linear-gradient(90deg,#9cdcfe 0 2.1px,transparent 2.1px 2.9px);"></div>
<div style="left:1188.31px;top:84.07px;width:22.41px;height:1.15px;opacity:0.38;background:repeating-linear-gradient(90deg,#ce9178 0 2.1px,transparent 2.1px 2.9px);"></div>
<div style="left:1157.95px;top:85.81px;width:5.78px;height:1.15px;opacity:0.38;background:repeating-linear-gradient(90deg,#569cd6 0 2.1px,transparent 2.1px 2.9px);"></div>
<div style="left:1164.46px;top:85.81px;width:10.84px;height:1.15px;opacity:0.38;background:repeating-linear-gradient(90deg,#9cdcfe 0 2.1px,transparent 2.1px 2.9px);"></div>
<div style="left:1177.47px;top:85.81px;width:9.40px;height:1.15px;opacity:0.38;background:repeating-linear-gradient(90deg,#ce9178 0 2.1px,transparent 2.1px 2.9px);"></div>
<div style="left:1157.95px;top:90.58px;width:3.61px;height:1.15px;opacity:0.38;background:repeating-linear-gradient(90deg,#569cd6 0 2.1px,transparent 2.1px 2.9px);"></div>
<div style="left:1162.29px;top:90.58px;width:6.51px;height:1.15px;opacity:0.38;background:repeating-linear-gradient(90deg,#9cdcfe 0 2.1px,transparent 2.1px 2.9px);"></div>
<div style="left:1161.57px;top:92.46px;width:7.23px;height:1.15px;opacity:0.38;background:repeating-linear-gradient(90deg,#9cdcfe 0 2.1px,transparent 2.1px 2.9px);"></div>
<div style="left:1161.57px;top:95.64px;width:17.35px;height:1.15px;opacity:0.38;background:repeating-linear-gradient(90deg,#d4d4d4 0 2.1px,transparent 2.1px 2.9px);"></div>
<div style="left:1161.57px;top:97.81px;width:10.12px;height:1.15px;opacity:0.38;background:repeating-linear-gradient(90deg,#d4d4d4 0 2.1px,transparent 2.1px 2.9px);"></div>
<div style="left:1161.57px;top:99.98px;width:1.73px;height:1.15px;opacity:0.38;background:repeating-linear-gradient(90deg,#d4d4d4 0 2.1px,transparent 2.1px 2.9px);"></div>
<div style="left:1161.57px;top:105.33px;width:19.52px;height:1.15px;opacity:0.38;background:repeating-linear-gradient(90deg,#dcdcaa 0 2.1px,transparent 2.1px 2.9px);"></div>
<div style="left:1161.57px;top:108.65px;width:16.63px;height:1.15px;opacity:0.38;background:repeating-linear-gradient(90deg,#dcdcaa 0 2.1px,transparent 2.1px 2.9px);"></div>
<div style="left:1165.18px;top:112.70px;width:2.17px;height:1.15px;opacity:0.38;background:repeating-linear-gradient(90deg,#c586c0 0 2.1px,transparent 2.1px 2.9px);"></div>
<div style="left:1168.51px;top:112.70px;width:14.75px;height:1.15px;opacity:0.38;background:repeating-linear-gradient(90deg,#9cdcfe 0 2.1px,transparent 2.1px 2.9px);"></div>
<div style="left:1184.70px;top:112.70px;width:11.57px;height:1.15px;opacity:0.38;background:repeating-linear-gradient(90deg,#ce9178 0 2.1px,transparent 2.1px 2.9px);"></div>
<div style="left:1168.79px;top:114.72px;width:2.89px;height:1.15px;opacity:0.38;background:repeating-linear-gradient(90deg,#569cd6 0 2.1px,transparent 2.1px 2.9px);"></div>
<div style="left:1172.41px;top:114.72px;width:7.23px;height:1.15px;opacity:0.38;background:repeating-linear-gradient(90deg,#9cdcfe 0 2.1px,transparent 2.1px 2.9px);"></div>
<div style="left:1172.41px;top:116.60px;width:6.51px;height:1.15px;opacity:0.38;background:repeating-linear-gradient(90deg,#9cdcfe 0 2.1px,transparent 2.1px 2.9px);"></div>
<div style="left:1172.41px;top:118.34px;width:7.23px;height:1.15px;opacity:0.38;background:repeating-linear-gradient(90deg,#9cdcfe 0 2.1px,transparent 2.1px 2.9px);"></div>
<div style="left:1181.08px;top:118.34px;width:32.53px;height:1.15px;opacity:0.38;background:repeating-linear-gradient(90deg,#9cdcfe 0 2.1px,transparent 2.1px 2.9px);"></div>
<div style="left:1172.41px;top:120.22px;width:11.57px;height:1.15px;opacity:0.38;background:repeating-linear-gradient(90deg,#9cdcfe 0 2.1px,transparent 2.1px 2.9px);"></div>
<div style="left:1168.79px;top:123.83px;width:4.34px;height:1.15px;opacity:0.38;background:repeating-linear-gradient(90deg,#569cd6 0 2.1px,transparent 2.1px 2.9px);"></div>
<div style="left:1173.85px;top:123.83px;width:35.42px;height:1.15px;opacity:0.38;background:repeating-linear-gradient(90deg,#9cdcfe 0 2.1px,transparent 2.1px 2.9px);"></div>
<div style="left:1168.79px;top:125.57px;width:4.34px;height:1.15px;opacity:0.38;background:repeating-linear-gradient(90deg,#569cd6 0 2.1px,transparent 2.1px 2.9px);"></div>
<div style="left:1173.85px;top:125.57px;width:33.97px;height:1.15px;opacity:0.38;background:repeating-linear-gradient(90deg,#9cdcfe 0 2.1px,transparent 2.1px 2.9px);"></div>
<div style="left:1168.79px;top:127.45px;width:4.34px;height:1.15px;opacity:0.38;background:repeating-linear-gradient(90deg,#569cd6 0 2.1px,transparent 2.1px 2.9px);"></div>
<div style="left:1173.85px;top:127.45px;width:25.30px;height:1.15px;opacity:0.38;background:repeating-linear-gradient(90deg,#dcdcaa 0 2.1px,transparent 2.1px 2.9px);"></div>
<div style="left:1165.18px;top:131.06px;width:4.34px;height:1.15px;opacity:0.38;background:repeating-linear-gradient(90deg,#c586c0 0 2.1px,transparent 2.1px 2.9px);"></div>
<div style="left:1170.24px;top:131.06px;width:18.79px;height:1.15px;opacity:0.38;background:repeating-linear-gradient(90deg,#9cdcfe 0 2.1px,transparent 2.1px 2.9px);"></div>
<div style="left:1190.48px;top:131.06px;width:23.13px;height:1.15px;opacity:0.38;background:repeating-linear-gradient(90deg,#ce9178 0 2.1px,transparent 2.1px 2.9px);"></div>
<div style="left:1168.79px;top:133.23px;width:4.34px;height:1.15px;opacity:0.38;background:repeating-linear-gradient(90deg,#569cd6 0 2.1px,transparent 2.1px 2.9px);"></div>
<div style="left:1173.85px;top:133.23px;width:44.09px;height:1.15px;opacity:0.38;background:repeating-linear-gradient(90deg,#9cdcfe 0 2.1px,transparent 2.1px 2.9px);"></div>
<div style="left:1168.79px;top:134.96px;width:4.34px;height:1.15px;opacity:0.38;background:repeating-linear-gradient(90deg,#569cd6 0 2.1px,transparent 2.1px 2.9px);"></div>
<div style="left:1173.85px;top:134.96px;width:25.30px;height:1.15px;opacity:0.38;background:repeating-linear-gradient(90deg,#dcdcaa 0 2.1px,transparent 2.1px 2.9px);"></div>
<div style="left:1165.18px;top:139.01px;width:4.34px;height:1.15px;opacity:0.38;background:repeating-linear-gradient(90deg,#c586c0 0 2.1px,transparent 2.1px 2.9px);"></div>
<div style="left:1170.24px;top:139.01px;width:18.79px;height:1.15px;opacity:0.38;background:repeating-linear-gradient(90deg,#9cdcfe 0 2.1px,transparent 2.1px 2.9px);"></div>
<div style="left:1190.48px;top:139.01px;width:23.13px;height:1.15px;opacity:0.38;background:repeating-linear-gradient(90deg,#ce9178 0 2.1px,transparent 2.1px 2.9px);"></div>
<div style="left:1168.79px;top:142.63px;width:4.34px;height:1.15px;opacity:0.38;background:repeating-linear-gradient(90deg,#569cd6 0 2.1px,transparent 2.1px 2.9px);"></div>
<div style="left:1173.85px;top:142.63px;width:49.15px;height:1.15px;opacity:0.38;background:repeating-linear-gradient(90deg,#9cdcfe 0 2.1px,transparent 2.1px 2.9px);"></div>
<div style="left:1168.79px;top:144.51px;width:4.34px;height:1.15px;opacity:0.38;background:repeating-linear-gradient(90deg,#569cd6 0 2.1px,transparent 2.1px 2.9px);"></div>
<div style="left:1173.85px;top:144.51px;width:25.30px;height:1.15px;opacity:0.38;background:repeating-linear-gradient(90deg,#dcdcaa 0 2.1px,transparent 2.1px 2.9px);"></div>
<div style="left:1165.18px;top:147.69px;width:4.34px;height:1.15px;opacity:0.38;background:repeating-linear-gradient(90deg,#c586c0 0 2.1px,transparent 2.1px 2.9px);"></div>
<div style="left:1170.24px;top:147.69px;width:14.46px;height:1.15px;opacity:0.38;background:repeating-linear-gradient(90deg,#9cdcfe 0 2.1px,transparent 2.1px 2.9px);"></div>
<div style="left:1186.14px;top:147.69px;width:13.01px;height:1.15px;opacity:0.38;background:repeating-linear-gradient(90deg,#ce9178 0 2.1px,transparent 2.1px 2.9px);"></div>
<div style="left:1168.79px;top:150.29px;width:4.34px;height:1.15px;opacity:0.38;background:repeating-linear-gradient(90deg,#569cd6 0 2.1px,transparent 2.1px 2.9px);"></div>
<div style="left:1173.85px;top:150.29px;width:47.71px;height:1.15px;opacity:0.38;background:repeating-linear-gradient(90deg,#9cdcfe 0 2.1px,transparent 2.1px 2.9px);"></div>
<div style="left:1168.79px;top:152.02px;width:4.34px;height:1.15px;opacity:0.38;background:repeating-linear-gradient(90deg,#569cd6 0 2.1px,transparent 2.1px 2.9px);"></div>
<div style="left:1173.85px;top:152.02px;width:31.08px;height:1.15px;opacity:0.38;background:repeating-linear-gradient(90deg,#9cdcfe 0 2.1px,transparent 2.1px 2.9px);"></div>
<div style="left:1168.79px;top:154.19px;width:4.34px;height:1.15px;opacity:0.38;background:repeating-linear-gradient(90deg,#569cd6 0 2.1px,transparent 2.1px 2.9px);"></div>
<div style="left:1173.85px;top:154.19px;width:28.19px;height:1.15px;opacity:0.38;background:repeating-linear-gradient(90deg,#dcdcaa 0 2.1px,transparent 2.1px 2.9px);"></div>
<div style="left:1204.94px;top:154.19px;width:29.64px;height:1.15px;opacity:0.38;background:repeating-linear-gradient(90deg,#d4d4d4 0 2.1px,transparent 2.1px 2.9px);"></div>
<div style="left:1165.18px;top:157.81px;width:1.01px;height:1.15px;opacity:0.38;background:repeating-linear-gradient(90deg,#d4d4d4 0 2.1px,transparent 2.1px 2.9px);"></div>
<div style="left:1161.57px;top:159.97px;width:1.01px;height:1.15px;opacity:0.38;background:repeating-linear-gradient(90deg,#d4d4d4 0 2.1px,transparent 2.1px 2.9px);"></div>
<div style="left:1157.95px;top:162.87px;width:5.06px;height:1.15px;opacity:0.38;background:repeating-linear-gradient(90deg,#c586c0 0 2.1px,transparent 2.1px 2.9px);"></div>
<div style="left:1164.46px;top:162.87px;width:4.34px;height:1.15px;opacity:0.38;background:repeating-linear-gradient(90deg,#569cd6 0 2.1px,transparent 2.1px 2.9px);"></div>
<div style="left:1169.52px;top:162.87px;width:16.63px;height:1.15px;opacity:0.38;background:repeating-linear-gradient(90deg,#dcdcaa 0 2.1px,transparent 2.1px 2.9px);"></div>
<div style="left:1188.31px;top:162.87px;width:25.30px;height:1.15px;opacity:0.38;background:repeating-linear-gradient(90deg,#d4d4d4 0 2.1px,transparent 2.1px 2.9px);"></div>
<div style="left:1217.95px;top:162.87px;width:36.14px;height:1.15px;opacity:0.38;background:repeating-linear-gradient(90deg,#d4d4d4 0 2.1px,transparent 2.1px 2.9px);"></div>
<div style="left:1157.95px;top:165.03px;width:5.06px;height:1.15px;opacity:0.38;background:repeating-linear-gradient(90deg,#c586c0 0 2.1px,transparent 2.1px 2.9px);"></div>
<div style="left:1164.46px;top:165.03px;width:4.34px;height:1.15px;opacity:0.38;background:repeating-linear-gradient(90deg,#569cd6 0 2.1px,transparent 2.1px 2.9px);"></div>
<div style="left:1169.52px;top:165.03px;width:16.63px;height:1.15px;opacity:0.38;background:repeating-linear-gradient(90deg,#dcdcaa 0 2.1px,transparent 2.1px 2.9px);"></div>
<div style="left:1188.31px;top:165.03px;width:25.30px;height:1.15px;opacity:0.38;background:repeating-linear-gradient(90deg,#d4d4d4 0 2.1px,transparent 2.1px 2.9px);"></div>
<div style="left:1157.95px;top:166.77px;width:5.06px;height:1.15px;opacity:0.38;background:repeating-linear-gradient(90deg,#c586c0 0 2.1px,transparent 2.1px 2.9px);"></div>
<div style="left:1164.46px;top:166.77px;width:4.34px;height:1.15px;opacity:0.38;background:repeating-linear-gradient(90deg,#569cd6 0 2.1px,transparent 2.1px 2.9px);"></div>
<div style="left:1169.52px;top:166.77px;width:16.63px;height:1.15px;opacity:0.38;background:repeating-linear-gradient(90deg,#dcdcaa 0 2.1px,transparent 2.1px 2.9px);"></div>
<div style="left:1188.31px;top:166.77px;width:25.30px;height:1.15px;opacity:0.38;background:repeating-linear-gradient(90deg,#9cdcfe 0 2.1px,transparent 2.1px 2.9px);"></div>
<div style="left:1217.95px;top:166.77px;width:36.14px;height:1.15px;opacity:0.38;background:repeating-linear-gradient(90deg,#d4d4d4 0 2.1px,transparent 2.1px 2.9px);"></div>
<div style="left:1157.95px;top:169.08px;width:5.06px;height:1.15px;opacity:0.38;background:repeating-linear-gradient(90deg,#c586c0 0 2.1px,transparent 2.1px 2.9px);"></div>
<div style="left:1164.46px;top:169.08px;width:4.34px;height:1.15px;opacity:0.38;background:repeating-linear-gradient(90deg,#569cd6 0 2.1px,transparent 2.1px 2.9px);"></div>
<div style="left:1169.52px;top:169.08px;width:16.63px;height:1.15px;opacity:0.38;background:repeating-linear-gradient(90deg,#dcdcaa 0 2.1px,transparent 2.1px 2.9px);"></div>
<div style="left:1188.31px;top:169.08px;width:25.30px;height:1.15px;opacity:0.38;background:repeating-linear-gradient(90deg,#9cdcfe 0 2.1px,transparent 2.1px 2.9px);"></div>
<div style="left:1217.95px;top:169.08px;width:34.70px;height:1.15px;opacity:0.38;background:repeating-linear-gradient(90deg,#d4d4d4 0 2.1px,transparent 2.1px 2.9px);"></div>
<div style="left:1157.95px;top:170.82px;width:6.51px;height:1.15px;opacity:0.38;background:repeating-linear-gradient(90deg,#c586c0 0 2.1px,transparent 2.1px 2.9px);"></div>
<div style="left:1165.90px;top:170.82px;width:10.12px;height:1.15px;opacity:0.38;background:repeating-linear-gradient(90deg,#9cdcfe 0 2.1px,transparent 2.1px 2.9px);"></div>
<div style="left:1157.95px;top:172.55px;width:6.51px;height:1.15px;opacity:0.38;background:repeating-linear-gradient(90deg,#c586c0 0 2.1px,transparent 2.1px 2.9px);"></div>
<div style="left:1165.90px;top:172.55px;width:10.12px;height:1.15px;opacity:0.38;background:repeating-linear-gradient(90deg,#9cdcfe 0 2.1px,transparent 2.1px 2.9px);"></div>
<div style="left:1268px;top:80.0px;width:12px;height:159.8px;background:#464648;"></div>
<div style="left:1267.6px;top:80.0px;width:5px;height:159.8px;background:#3f6a90;"></div>
<div style="left:1267.6px;top:106px;width:5px;height:2.2px;background:#55595c;"></div>
<div style="left:1267.6px;top:155px;width:5px;height:2.2px;background:#55595c;"></div>
<div style="left:1267.6px;top:239.8px;width:5px;height:26.80000000000001px;background:#0f5a90;"></div>
<div style="left:1267.6px;top:270.7px;width:5px;height:73px;background:#0f5a90;"></div>
<div style="left:1267.6px;top:350.7px;width:5px;height:36px;background:#0f5a90;"></div>
<div style="left:1267.3px;top:80.4px;width:0.8px;height:462.1px;background:#2c2c2d;"></div>
<div style="left:239.5px;top:542.0px;width:1040.5px;height:1.1px;background:#414141;"></div>
<span style="left:257.64px;top:553.29px;font-size:10.3px;line-height:14.42px;color:#8b8b8b;letter-spacing:-0.959px;-webkit-text-stroke:0.25px #8b8b8b;">PROBLEMS</span>
<span style="left:326.89px;top:553.29px;font-size:10.3px;line-height:14.42px;color:#8b8b8b;letter-spacing:-0.815px;-webkit-text-stroke:0.25px #8b8b8b;">OUTPUT</span>
<span style="left:383.89px;top:553.29px;font-size:10.3px;line-height:14.42px;color:#8b8b8b;letter-spacing:-0.756px;-webkit-text-stroke:0.25px #8b8b8b;">DEBUG CONSOLE</span>
<span style="left:483.14px;top:553.29px;font-size:10.3px;line-height:14.42px;color:#e7e7e7;letter-spacing:-0.544px;-webkit-text-stroke:0.25px #e7e7e7;">TERMINAL</span>
<div style="left:483px;top:571.6px;width:48.3px;height:1px;background:#7f7f7f;"></div>
<div style="left:971.8px;top:549.6px;width:149.5px;height:19.2px;background:#3c3c3c;"></div>
<span style="left:976.32px;top:551.96px;font-size:12.2px;line-height:17.08px;color:#f0f0f0;letter-spacing:0.122px;-webkit-text-stroke:0.25px #f0f0f0;">1: node</span>
<svg style="left:1109px;top:556.4px;" width="7" height="5.4" viewBox="0 0 7 5.4"><path d="M0.3 0.2h6.2L3.4 5z" fill="#e8e8e8"/></svg>
<svg style="left:1138px;top:554px;" width="12" height="12" viewBox="0 0 12 12"><path d="M6 0.4v11.2M0.4 6h11.2" stroke="#d0d0d0" stroke-width="3.2"/></svg>
<svg style="left:1167px;top:554px;" width="14" height="12" viewBox="0 0 14 12"><path d="M0.8 0.8h12.2v10.4H0.8z M7 2.6v8.6" fill="none" stroke="#d0d0d0" stroke-width="1.5"/><rect x="0.8" y="0.8" width="12.2" height="2.6" fill="#d0d0d0"/></svg>
<svg style="left:1197.5px;top:553px;" width="11" height="13.5" viewBox="0 0 11 13.5"><path d="M0.4 2.6h10.2M3.8 2.4V0.8h3.4v1.6" fill="none" stroke="#d0d0d0" stroke-width="1.5"/><path d="M1.4 4h8.2v8.2c0 .7-.5 1.1-1.1 1.1H2.5c-.6 0-1.1-.4-1.1-1.1z" fill="#d0d0d0"/><path d="M3.6 5.6v5.8M5.5 5.6v5.8M7.4 5.6v5.8" stroke="#1e1e1e" stroke-width="0.8"/></svg>
<svg style="left:1226.5px;top:555.5px;" width="15" height="9.5" viewBox="0 0 15 9.5"><path d="M1.200 8.200L7.400 1.800L13.600 8.200" fill="none" stroke="#d0d0d0" stroke-width="1.7"/></svg>
<svg style="left:1258.8px;top:555.2px;" width="9.6" height="9.6" viewBox="0 0 9.6 9.6"><path d="M1 1L8.6 8.6M8.6 1L1 8.6" stroke="#d0d0d0" stroke-width="2.7"/></svg>
<div class="code" style="left:257.3px;top:595.5px;height:16px;line-height:16px;font-family:'Liberation Mono',monospace;font-size:12.5px;white-space:pre;color:#cccccc;transform:scaleX(0.8768);transform-origin:0 0;-webkit-text-stroke:0.2px;"><span style="color:#cccccc">Search for the </span><span style="color:#e5e510">keywords</span><span style="color:#cccccc"> to learn more about each warning.</span></div>
<div class="code" style="left:257.3px;top:611.3px;height:16px;line-height:16px;font-family:'Liberation Mono',monospace;font-size:12.5px;white-space:pre;color:#cccccc;transform:scaleX(0.8768);transform-origin:0 0;-webkit-text-stroke:0.2px;"><span style="color:#cccccc">To ignore, add </span><span style="color:#2a9fd6">// eslint-disable-next-line</span><span style="color:#cccccc"> to the line before.</span></div>
<div style="left:257.2px;top:642.2px;width:7px;height:15.4px;background:transparent;box-sizing:border-box;border:1px solid #c8c8c8;"></div>
<svg style="left:12px;top:664px;" width="9" height="13.5" viewBox="0 0 9 13.5"><g fill="none" stroke="#ffffff" stroke-width="1.3"><circle cx="2.4" cy="2.4" r="1.5"/><circle cx="6.9" cy="3.6" r="1.4"/><circle cx="2.4" cy="11" r="1.5"/><path d="M2.4 4v5.5M6.9 5c0 2.6-4.5 2-4.5 4.6" stroke-width="1.5"/></g></svg>
<span style="left:24.57px;top:662.56px;font-size:12.2px;line-height:17.08px;color:#ffffff;letter-spacing:-0.641px;-webkit-text-stroke:0.25px #ffffff;">master*</span>
<svg style="left:78px;top:664.6px;" width="12.2" height="12.2" viewBox="0 0 12.2 12.2"><circle cx="6.1" cy="6.1" r="5.9" fill="#ffffff"/><path d="M3.7 3.7l4.8 4.8M8.5 3.7L3.7 8.5" stroke="#007acc" stroke-width="1.5"/></svg>
<span style="left:93.82px;top:662.56px;font-size:12.2px;line-height:17.08px;color:#ffffff;letter-spacing:0.000px;-webkit-text-stroke:0.25px #ffffff;">0</span>
<svg style="left:103.6px;top:664.6px;" width="12.2" height="12" viewBox="0 0 12.2 12"><path d="M6.1 0.4L12 11.4H0.2z" fill="#ffffff"/><path d="M6.1 4v4.2M6.1 9.2v1.3" stroke="#007acc" stroke-width="1.3"/></svg>
<span style="left:119.57px;top:662.56px;font-size:12.2px;line-height:17.08px;color:#ffffff;letter-spacing:0.000px;-webkit-text-stroke:0.25px #ffffff;">0</span>
<span style="left:140.57px;top:662.56px;font-size:12.2px;line-height:17.08px;color:#ffffff;letter-spacing:-0.782px;-webkit-text-stroke:0.25px #ffffff;">{..} : Scanning..</span>
<span style="left:955.07px;top:662.56px;font-size:12.2px;line-height:17.08px;color:#ffffff;letter-spacing:-0.705px;-webkit-text-stroke:0.25px #ffffff;">Ln 1, Col 1</span>
<span style="left:1021.32px;top:662.56px;font-size:12.2px;line-height:17.08px;color:#ffffff;letter-spacing:-1.131px;-webkit-text-stroke:0.25px #ffffff;">Spaces: 4</span>
<span style="left:1080.82px;top:662.56px;font-size:12.2px;line-height:17.08px;color:#ffffff;letter-spacing:-1.282px;-webkit-text-stroke:0.25px #ffffff;">UTF-8</span>
<span style="left:1124.32px;top:662.56px;font-size:12.2px;line-height:17.08px;color:#ffffff;letter-spacing:-2.391px;-webkit-text-stroke:0.25px #ffffff;">CRLF</span>
<span style="left:1163.07px;top:662.56px;font-size:12.2px;line-height:17.08px;color:#ffffff;letter-spacing:-0.861px;-webkit-text-stroke:0.25px #ffffff;">JavaScript</span>
<svg style="left:1226.5px;top:664.2px;" width="13.4" height="13.4" viewBox="0 0 13.4 13.4"><circle cx="6.7" cy="6.7" r="6.3" fill="#ffffff"/><circle cx="4.5" cy="5" r="0.95" fill="#007acc"/><circle cx="8.9" cy="5" r="0.95" fill="#007acc"/><path d="M3.3 7.6c1 3.2 5.8 3.2 6.8 0" fill="none" stroke="#007acc" stroke-width="1.1"/></svg>
<svg style="left:1253.6px;top:664px;" width="13" height="13.5" viewBox="0 0 13 13.5"><path d="M6.5 0.8c.7 0 1 .4 1 1 2 .6 2.9 2.4 2.9 4.6 0 2.2.8 3.2 1.9 4v.7H.7v-.7c1.100-.8 1.900-1.800 1.900-4C2.600 4.200 3.500 2.400 5.500 1.800c0-.600.300-1 1-1z" fill="#ffffff"/><path d="M5 11.8h3c0 .9-.7 1.400-1.500 1.400S5 12.700 5 11.800z" fill="#ffffff"/></svg>
<div style="left:0px;top:679.8px;width:1280px;height:39.5px;background:#a8c0dc;"></div>
<div style="left:0;top:683px;width:1280px;height:36px;background:linear-gradient(90deg,#8d9cb4 0,#8d9cb4 54px,#a8c0dc 56px,#a8c0dc 1044px,#8ea4c1 1060px,#7d91ac 1080px,#7a8ea9 1280px);"></div>
<div style="left:0px;top:679.8px;width:1280px;height:1.8px;background:#8db3d5;"></div>
<div style="left:0px;top:681.5px;width:1280px;height:1.4px;background:#8594a8;"></div>
<div style="left:0px;top:682.9px;width:1280px;height:1.2px;background:#c2cddd;opacity:.9"></div>
<svg style="left:7.5px;top:683.2px;" width="35" height="35" viewBox="0 0 35 35"><defs>
<radialGradient id="orb" cx="50%" cy="95%" r="85%"><stop offset="0" stop-color="#3fe0ff"/><stop offset="0.3" stop-color="#1f9ad8"/><stop offset="0.6" stop-color="#16508c"/><stop offset="0.8" stop-color="#2d5680"/><stop offset="1" stop-color="#7f9bb8"/></radialGradient>
<linearGradient id="orbg" x1="0" y1="0" x2="0" y2="1"><stop offset="0" stop-color="#fff" stop-opacity=".6"/><stop offset="1" stop-color="#fff" stop-opacity=".12"/></linearGradient></defs>
<circle cx="17.5" cy="17.5" r="16.6" fill="url(#orb)" stroke="#4f6f92" stroke-width="1"/>
<path d="M2.400 15.200A15.400 15.400 0 0 1 32.600 15.200C25 19.800 10 19.800 2.400 15.200z" fill="url(#orbg)"/>
<g transform="translate(17.700 17.600) scale(1.320) translate(-15.700 -17.600)">
<path d="M10.200 10.400c2.100-1.200 4.300-1.100 6.200.1l-1.500 6.100c-2-1.200-4.100-1.300-6.300-.1z" fill="#f0662a"/>
<path d="M17.800 11.100c2 1.100 4.100 1.200 6.300 0l-1.600 6.200c-2.100 1.100-4.200 1-6.200-.1z" fill="#95cb3f"/>
<path d="M8.200 18c2.100-1.200 4.300-1.100 6.300.1l-1.600 6.300c-2-1.200-4.100-1.300-6.300-.1z" fill="#46a8e6"/>
<path d="M15.900 18.700c2 1.100 4.100 1.200 6.200 0l-1.600 6.300c-2.100 1.100-4.200 1-6.200-.1z" fill="#fbc92e"/></g></svg>
<div style="left:55.5px;top:682.6px;width:55.2px;height:35px;box-sizing:border-box;border:1px solid #5c6b82;border-radius:3px;background:linear-gradient(90deg,rgba(140,155,180,.55) 0%,rgba(140,155,180,0) 45%),linear-gradient(180deg,#c9d4e5 0%,#b9c8dd 55%,#b2c2da 100%);box-shadow:inset 0 0 0 1px rgba(255,255,255,.45);"></div>
<div style="left:113.7px;top:682.6px;width:55.7px;height:35px;box-sizing:border-box;border:1px solid #4f6078;border-radius:3px;background:linear-gradient(180deg,#eef4fa 0%,#cfe3f3 35%,#a9cbe8 60%,#cfe4f4 100%);box-shadow:inset 0 0 0 1px rgba(255,255,255,.45);"></div>
<div style="left:172px;top:682.6px;width:55.599999999999994px;height:35px;box-sizing:border-box;border:1px solid #5c6b82;border-radius:3px;background:linear-gradient(90deg,rgba(140,155,180,.55) 0%,rgba(140,155,180,0) 45%),linear-gradient(180deg,#c9d4e5 0%,#b9c8dd 55%,#b2c2da 100%);box-shadow:inset 0 0 0 1px rgba(255,255,255,.45);"></div>
<svg style="left:69px;top:686px;" width="29" height="29" viewBox="0 0 29 29"><path d="M14.28 7.80L26.80 7.40A14.2 14.2 0 0 0 2.20 7.40L8.81 18.04A6.7 6.7 0 0 1 14.28 7.80z" fill="#dd4b3e"/><path d="M8.81 18.04L2.20 7.40A14.2 14.2 0 0 0 14.50 28.70L20.41 17.66A6.7 6.7 0 0 1 8.81 18.04z" fill="#1aa260"/><path d="M20.41 17.66L14.50 28.70A14.2 14.2 0 0 0 26.80 7.40L14.28 7.80A6.7 6.7 0 0 1 20.41 17.66z" fill="#ffce44"/><circle cx="14.5" cy="14.5" r="6.7" fill="#f1f1f1"/><circle cx="14.5" cy="14.5" r="5.3" fill="#4a8af4"/></svg>
<svg style="left:125px;top:684px;" width="33" height="32" viewBox="0 0 33 32"><path d="M4.400 10.200L24 27.600" stroke="#0f74c0" stroke-width="4.600" stroke-linecap="round"/>
<path d="M4.400 21.200L24 3.800" stroke="#0f74c0" stroke-width="4.600" stroke-linecap="round"/>
<path d="M22.800 1.400L31.600 5.200V26.200L22.800 30z" fill="#2aa2f2"/>
<path d="M22.800 1.400L31.600 5.200V26.200L22.800 30z" fill="none" stroke="#2aa2f2" stroke-width="1" stroke-linejoin="round"/></svg>
<svg style="left:185.8px;top:686.2px;" width="28" height="28" viewBox="0 0 28 28"><defs><linearGradient id="tg" x1="0" y1="0" x2="0" y2="1"><stop offset="0" stop-color="#37aee2"/><stop offset="1" stop-color="#1e96c8"/></linearGradient></defs>
<circle cx="14" cy="14" r="13.800" fill="url(#tg)"/>
<path d="M5.600 13.600L20.600 7.800c.700-.300 1.300.200 1.100 1.100L19.100 20.800c-.200.900-.700 1.100-1.400.700l-3.900-2.900-1.900 1.800c-.200.200-.400.400-.800.400l.3-4 7.200-6.500c.300-.300-.1-.400-.500-.200l-8.900 5.600-3.800-1.200c-.800-.300-.800-.800.200-1.200z" fill="#ffffff"/></svg>
<div style="left:200.3px;top:707px;width:13.6px;height:7.6px;background:#8c8c8c;border-radius:1px;"></div>
<span style="left:203.22px;top:705.70px;font-size:8.0px;line-height:11.2px;color:#f0f0f0;letter-spacing:-0.446px;font-weight:700;">39</span>
<span style="left:1079.60px;top:690.59px;font-size:11.3px;line-height:15.82px;color:#e9eef5;letter-spacing:-2.112px;-webkit-text-stroke:0.25px #e9eef5;">EN</span>
<svg style="left:1108.6px;top:698.6px;" width="8" height="5" viewBox="0 0 8 5"><path d="M0.2 4.6L4 0.5L7.800 4.600z" fill="#e9eef5"/></svg>
<svg style="left:1127.5px;top:691.5px;" width="15" height="16" viewBox="0 0 15 16"><path d="M1.600 3.200h6.200v11.600H1.600z" fill="none" stroke="#e9eef5" stroke-width="1.300"/><path d="M3.500 1.400h2.400v1.800H3.500z" fill="#e9eef5"/>
<path d="M7.600 4.200h5.400v3.600c0 1.300-1 2.200-2.100 2.300v3.500H9.700v-3.500c-1.200-.1-2.100-1-2.100-2.300z" fill="#e9eef5" stroke="#6e829d" stroke-width=".6"/><path d="M8.800 1.800v2.600M11.800 1.800v2.600" stroke="#e9eef5" stroke-width="1.100"/></svg>
<svg style="left:1150px;top:693.5px;" width="17" height="12" viewBox="0 0 17 12"><path d="M1 11.500h15" stroke="#e9eef5" stroke-width=".9"/>
<rect x="1.200" y="8.800" width="2" height="2.400" fill="#e9eef5"/><rect x="4.200" y="7" width="2" height="4.200" fill="#e9eef5"/><rect x="7.200" y="5" width="2" height="6.200" fill="#e9eef5"/><rect x="10.200" y="3" width="2" height="8.200" fill="#e9eef5"/><rect x="13.200" y=".8" width="2.200" height="10.400" fill="#e9eef5"/></svg>
<svg style="left:1172px;top:691.5px;" width="17" height="15" viewBox="0 0 17 15"><path d="M1 5.200h2.600L7.400 1.600v11.800L3.600 9.800H1z" fill="#e9eef5"/>
<path d="M9.200 5c1.100 1.400 1.100 3.600 0 5M11 3.200c2 2.400 2 6.200 0 8.600M12.900 1.600c2.800 3.300 2.800 8.500 0 11.800" fill="none" stroke="#e9eef5" stroke-width=".9"/></svg>
<span style="left:1217.60px;top:685.59px;font-size:11.3px;line-height:15.82px;color:#f0f4f9;letter-spacing:-0.798px;-webkit-text-stroke:0.25px #f0f4f9;">14:30</span>
<span style="left:1204.60px;top:700.59px;font-size:11.3px;line-height:15.82px;color:#f0f4f9;letter-spacing:-0.662px;-webkit-text-stroke:0.25px #f0f4f9;">02.07.2019</span>
<div style="left:1266px;top:683px;width:14px;height:36px;box-sizing:border-box;border-left:1px solid #aab4c2;background:linear-gradient(180deg,#9aa3ae 0%,#7a828d 30%,#5c646f 55%,#6f7782 80%,#8a929d 100%);box-shadow:inset -1px 0 0 rgba(255,255,255,.25), inset 0 1px 0 rgba(255,255,255,.3);"></div>
<div style="left:1265px;top:683px;width:1px;height:36px;background:#4c5564;"></div>
</div></body></html>
